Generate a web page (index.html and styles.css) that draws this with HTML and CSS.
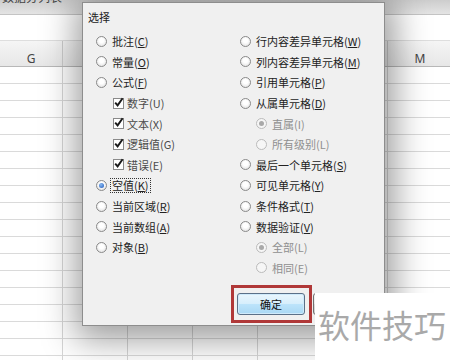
FILE: index.html
```html
<!DOCTYPE html>
<html lang="zh-CN">
<head>
  <meta charset="UTF-8">
  <meta name="viewport" content="width=device-width, initial-scale=1.0">
  <title>定位条件</title>
  <link rel="stylesheet" href="styles.css">
</head>
<body>
  <div class="sheet">
    <div class="ribbon"><span class="ribbon-text">数据分列表</span></div>
    <div class="formula-bar"></div>
    <div class="col-headers">
      <div class="col-head first">G</div>
      <div class="col-head"></div>
      <div class="col-head"></div>
      <div class="col-head"></div>
      <div class="col-head"></div>
      <div class="col-head"></div>
      <div class="col-head">M</div>
    </div>
    <div class="grid"></div>
  </div>

  <div class="dialog">
    <div class="group-label">选择</div>
    <div class="options">
      <div class="col">
        <div class="opt"><span class="radio"></span>批注(<u>C</u>)</div>
        <div class="opt"><span class="radio"></span>常量(<u>O</u>)</div>
        <div class="opt"><span class="radio"></span>公式(<u>F</u>)</div>
        <div class="opt check"><span class="box"><svg viewBox="0 0 11 11"><path d="M2.2 5.6 L4.6 8.4 L9.6 1.2" /></svg></span>数字(U)</div>
        <div class="opt check"><span class="box"><svg viewBox="0 0 11 11"><path d="M2.2 5.6 L4.6 8.4 L9.6 1.2" /></svg></span>文本(X)</div>
        <div class="opt check"><span class="box"><svg viewBox="0 0 11 11"><path d="M2.2 5.6 L4.6 8.4 L9.6 1.2" /></svg></span>逻辑值(G)</div>
        <div class="opt check"><span class="box"><svg viewBox="0 0 11 11"><path d="M2.2 5.6 L4.6 8.4 L9.6 1.2" /></svg></span>错误(E)</div>
        <div class="opt"><span class="radio on"></span><span class="focus">空值(<u>K</u>)</span></div>
        <div class="opt"><span class="radio"></span>当前区域(<u>R</u>)</div>
        <div class="opt"><span class="radio"></span>当前数组(<u>A</u>)</div>
        <div class="opt"><span class="radio"></span>对象(<u>B</u>)</div>
      </div>
      <div class="col">
        <div class="opt"><span class="radio"></span>行内容差异单元格(<u>W</u>)</div>
        <div class="opt"><span class="radio"></span>列内容差异单元格(<u>M</u>)</div>
        <div class="opt"><span class="radio"></span>引用单元格(<u>P</u>)</div>
        <div class="opt"><span class="radio"></span>从属单元格(<u>D</u>)</div>
        <div class="opt sub disabled"><span class="radio on"></span>直属(I)</div>
        <div class="opt sub disabled"><span class="radio"></span>所有级别(L)</div>
        <div class="opt"><span class="radio"></span>最后一个单元格(<u>S</u>)</div>
        <div class="opt"><span class="radio"></span>可见单元格(<u>Y</u>)</div>
        <div class="opt"><span class="radio"></span>条件格式(<u>T</u>)</div>
        <div class="opt"><span class="radio"></span>数据验证(<u>V</u>)</div>
        <div class="opt sub disabled"><span class="radio on"></span>全部(L)</div>
        <div class="opt sub disabled"><span class="radio"></span>相同(E)</div>
      </div>
    </div>
    <div class="buttons">
      <button class="btn btn-default">确定</button>
      <button class="btn" aria-label="取消"></button>
    </div>
  </div>

  <div class="highlight"></div>
  <div class="watermark">软件技巧</div>
</body>
</html>
```

FILE: styles.css
```css
body {
  margin: 0;
  font-family: "Noto Sans CJK SC", "Noto Sans", sans-serif;
  font-size: 11px;
  color: #222;
  background: #fff;
  overflow: hidden;
}

/* spreadsheet behind the dialog */
.sheet {
  width: 450px;
  height: 360px;
  overflow: hidden;
}

.ribbon {
  height: 14px;
  background: linear-gradient(#cdcdcd, #e4e4e4);
  border-bottom: 1px solid #c4c4c4;
  overflow: hidden;
}

.ribbon-text {
  display: block;
  margin-top: -10px;
  padding-left: 2px;
  font-size: 12px;
  line-height: 14px;
  color: #444;
}

.formula-bar {
  height: 25px;
  background: #fff;
}

.col-headers {
  display: flex;
  height: 25px;
  background: linear-gradient(#f5f5f5, #e7e7e7);
  border-top: 1px solid #dedede;
  border-bottom: 1px solid #b8b8b8;
}

.col-head {
  flex: 0 0 65px;
  box-sizing: border-box;
  border-right: 1px solid #cdcdcd;
  padding-top: 10px;
  line-height: 16px;
  text-align: center;
  font-family: "Noto Sans", sans-serif;
  font-size: 12px;
  color: #444;
}

.col-head.first {
  flex-basis: 63px;
}

.grid {
  height: 300px;
  background-image:
    linear-gradient(to right, #d6d6d6 1px, transparent 1px),
    linear-gradient(#fff 16px, #dadada 16px);
  background-size: 65px 17px;
  background-position: 62px 0, 0 0;
}

/* dialog */
.dialog {
  position: absolute;
  left: 82px;
  top: 2px;
  width: 303px;
  height: 324px;
  box-sizing: border-box;
  display: flex;
  flex-direction: column;
  padding-top: 7px;
  background: #f0f0f0;
  border: 1px solid #8d8d8d;
  box-shadow: 2px 6px 32px 8px rgba(0, 0, 0, 0.38);
}

.group-label {
  padding-left: 5px;
  line-height: 14px;
}

.options {
  display: flex;
  margin-top: 7px;
}

.col {
  width: 146px;
}

.col:first-child {
  padding-left: 13px;
}

.opt {
  display: flex;
  align-items: center;
  height: 20.6px;
  white-space: nowrap;
}

.opt.sub {
  padding-left: 16px;
}

.opt.check {
  padding-left: 17px;
  color: #4a4a4a;
}

.opt.disabled {
  color: #8f8f8f;
}

.radio {
  display: flex;
  align-items: center;
  justify-content: center;
  width: 11px;
  height: 11px;
  box-sizing: border-box;
  margin-right: 5px;
  border: 1px solid #8a8a8a;
  border-radius: 50%;
  background: radial-gradient(circle at 50% 40%, #fff 30%, #dadada);
}

.radio.on::after {
  content: "";
  width: 5px;
  height: 5px;
  border-radius: 50%;
  background: radial-gradient(circle at 40% 35%, #8bbcf3, #1d56b9);
}

.disabled .radio {
  border-color: #bbb;
  background: #f6f6f6;
}

.disabled .radio.on::after {
  background: #a9a9a9;
}

.box {
  width: 11px;
  height: 11px;
  box-sizing: border-box;
  margin-right: 3px;
  border: 1px solid #8a8a8a;
  background: #fff;
  overflow: visible;
}

.box svg {
  display: block;
  width: 11px;
  height: 11px;
  margin: -2px 0 0 -1px;
  overflow: visible;
}

.box path {
  fill: none;
  stroke: #1a1a1a;
  stroke-width: 1.9;
}

.focus {
  margin-left: -2px;
  padding: 0 1px;
  border: 1px dotted #333;
  line-height: 13px;
}

.buttons {
  display: flex;
  gap: 8px;
  margin-top: auto;
  padding: 0 0 10px 154px;
}

.btn {
  width: 68px;
  height: 22px;
  padding: 0;
  border: 1px solid #707070;
  border-radius: 3px;
  background: linear-gradient(#f2f2f2, #ebebeb 50%, #dddddd 50%, #cfcfcf);
  font-family: inherit;
  font-size: 11px;
  color: #111;
}

.btn-default {
  border-color: #5b7088;
  background: linear-gradient(#eaf6fd, #d6eefc 50%, #bde4fb 50%, #a9d8f4);
  box-shadow: inset 0 0 0 1px #cfeafb;
}

/* annotations drawn over the screenshot */
.highlight {
  position: absolute;
  left: 231px;
  top: 285px;
  width: 81px;
  height: 38px;
  box-sizing: border-box;
  border: 3px solid #b03838;
}

.watermark {
  position: absolute;
  left: 315px;
  top: 293px;
  right: 0;
  bottom: 0;
  padding: 11px 0 0 3px;
  background: #fff;
  font-size: 32px;
  line-height: 40px;
  color: #a9a9a9;
  white-space: nowrap;
}
```
